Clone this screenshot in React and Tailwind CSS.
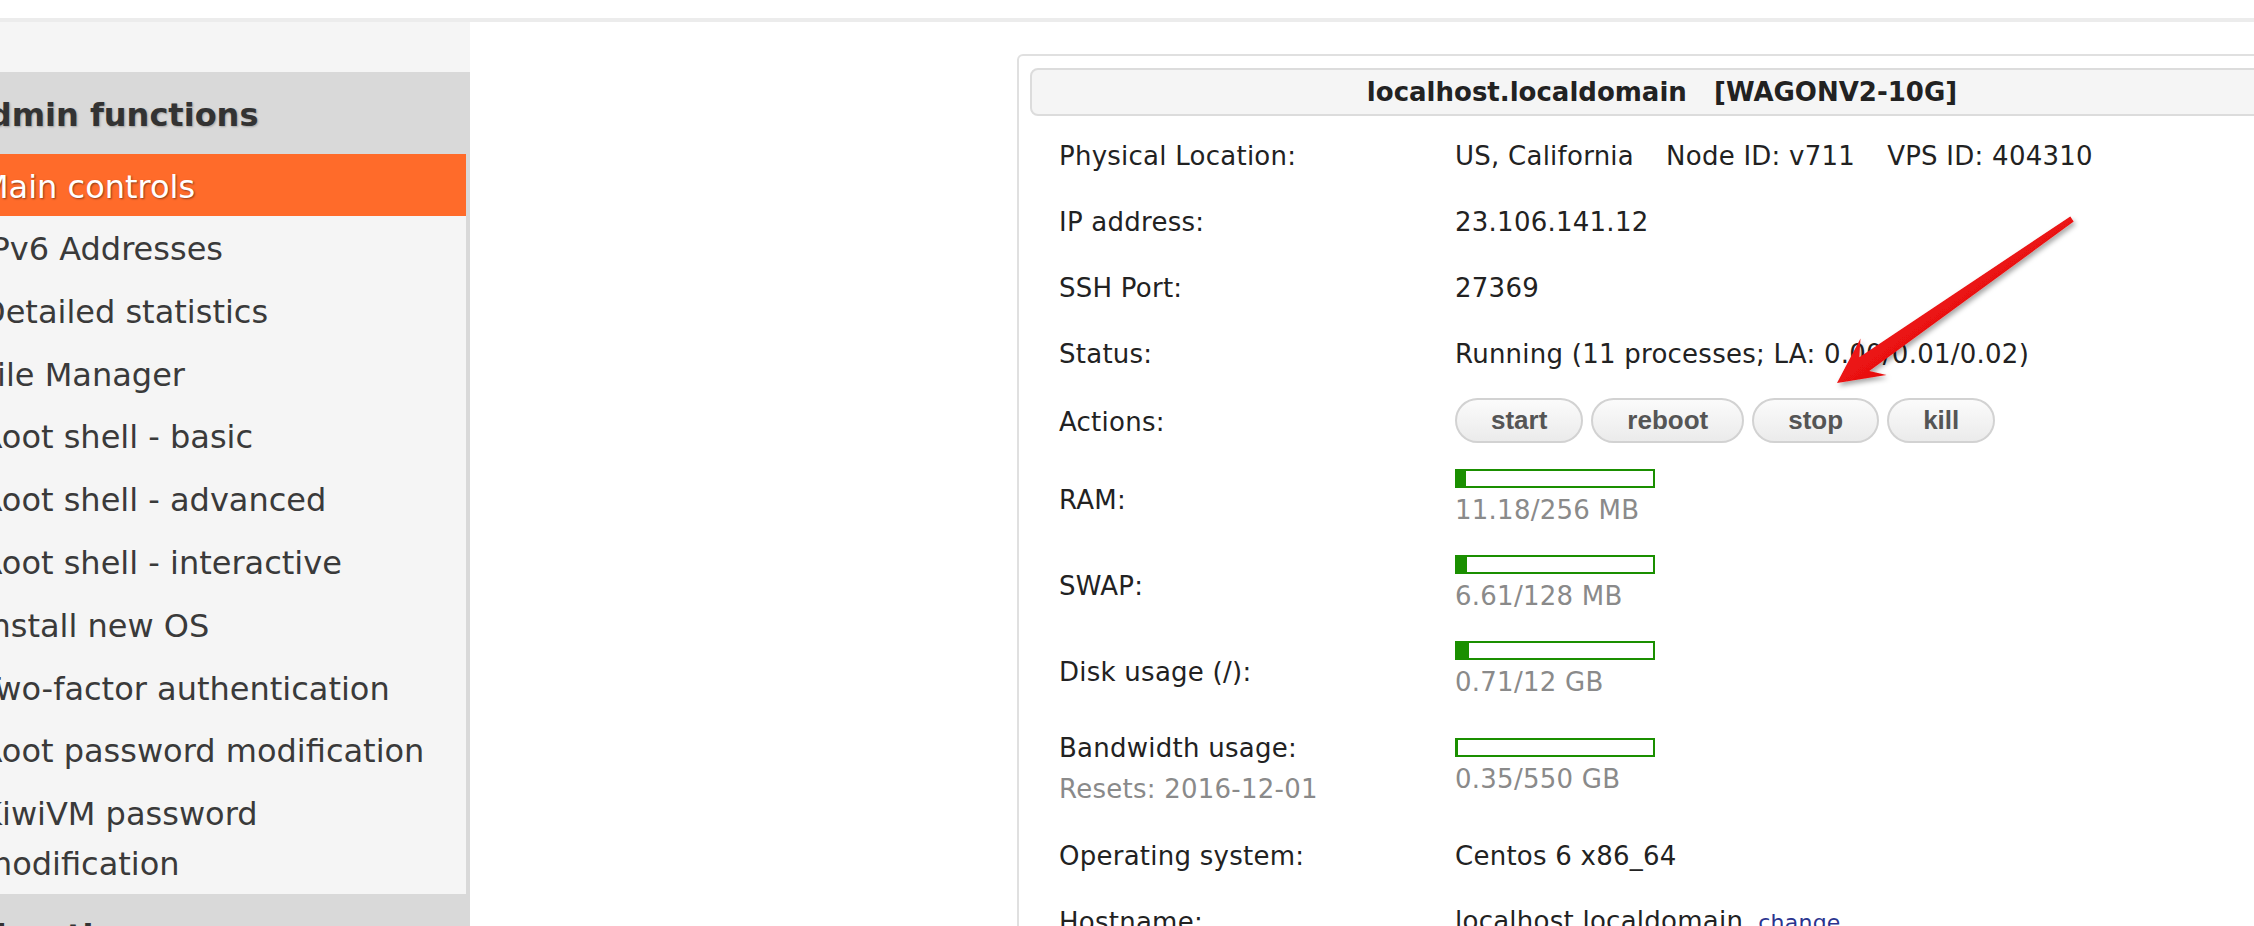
import React from 'react'

const menu = [
  'Main controls',
  'IPv6 Addresses',
  'Detailed statistics',
  'File Manager',
  'Root shell - basic',
  'Root shell - advanced',
  'Root shell - interactive',
  'Install new OS',
  'Two-factor authentication',
  'Root password modification',
]

const usage = [
  { label: 'RAM:', used: 11.18, total: 256, unit: 'MB' },
  { label: 'SWAP:', used: 6.61, total: 128, unit: 'MB' },
  { label: 'Disk usage (/):', used: 0.71, total: 12, unit: 'GB' },
]

function Sidebar() {
  return (
    <aside className="w-[470px] shrink-0 bg-[#f5f5f5] border-r-4 border-[#d9d9d9] text-[32px] text-[#3a3a3a]">
      <div className="h-[50px] -mr-1 bg-[#f5f5f5]" />
      <div className="h-[82px] -mr-1 pt-[3px] flex items-center bg-[#d9d9d9]">
        <div className="-ml-[36px] font-bold text-[#333] whitespace-nowrap [text-shadow:1px_1px_2px_rgba(0,0,0,0.25)]">
          Admin functions
        </div>
      </div>
      {menu.map((item, i) => (
        <div
          key={item}
          className={
            i === 0
              ? 'pt-[8px] pb-[4px] leading-[50px] bg-[#ff6b2a] text-white [text-shadow:1px_1px_2px_rgba(0,0,0,0.45)]'
              : 'pt-[8px] pb-[4.8px] leading-[50px]'
          }
        >
          <div className="-ml-[19px] whitespace-nowrap">{item}</div>
        </div>
      ))}
      <div className="pt-[8px] pb-[4.8px] leading-[50px]">
        <div className="-ml-[19px] whitespace-nowrap">
          KiwiVM password
          <br />
          modification
        </div>
      </div>
      <div className="h-[82px] -mr-1 pt-[3px] flex items-center bg-[#d9d9d9]">
        <div className="-ml-[36px] font-bold text-[#333] whitespace-nowrap">Migration</div>
      </div>
    </aside>
  )
}

function Bar({ used, total, unit }) {
  const pct = (used / total) * 100
  return (
    <div>
      <div className="w-[200px] h-[19px] border-2 border-[#1a8f00] bg-white">
        <div className="h-full bg-[#1a8f00]" style={{ width: `${pct}%` }} />
      </div>
      <div className="mt-[5px] leading-[34px] text-[#8a8a8a]">
        {used}/{total} {unit}
      </div>
    </div>
  )
}

function Row({ label, h, bar, children }) {
  return (
    <div className={`flex items-center ${h}`}>
      <div className="w-[396px] shrink-0 pt-[3px]">{label}</div>
      <div className={bar ? '' : 'pt-[3px]'}>{children}</div>
    </div>
  )
}

function Btn({ children }) {
  return (
    <button className="h-[45px] px-[34px] rounded-full border-2 border-[#d2d2d2] bg-gradient-to-b from-[#fbfbfb] to-[#ebebeb] font-['Liberation_Sans',Arial,sans-serif] font-bold text-[26px] tracking-normal text-[#555]">
      {children}
    </button>
  )
}

// red annotation arrow drawn over the status row
function Arrow() {
  return (
    <svg
      className="absolute left-0 top-0 pointer-events-none"
      width="2254"
      height="926"
      viewBox="0 0 2254 926"
    >
      <defs>
        <linearGradient id="red" x1="0" y1="0" x2="1" y2="1">
          <stop offset="0" stopColor="#ff2424" />
          <stop offset="1" stopColor="#d60000" />
        </linearGradient>
        <filter id="sh" x="-20%" y="-20%" width="140%" height="140%">
          <feDropShadow dx="2" dy="3" stdDeviation="2.5" floodColor="#000" floodOpacity="0.35" />
        </filter>
      </defs>
      <polygon
        points="1837,383 1886.5,375 1869.3,371 2073.7,221.6 2070.3,216.4 1859.3,357.3 1860.5,338.5"
        fill="url(#red)"
        filter="url(#sh)"
      />
    </svg>
  )
}

export default function App() {
  return (
    <div className="relative w-[2254px] h-[926px] overflow-hidden bg-white font-['DejaVu_Sans',sans-serif] text-[#222]">
      <div className="h-[18px]" />
      <div className="h-[4px] bg-[#ececec]" />
      <div className="flex">
        <Sidebar />
        <main className="flex-1 pt-[32px] pl-[547px] text-[26px]">
          <div className="w-[1290px] rounded-[6px] border-2 border-[#e0e0e0] px-[11px] pt-[12px] pb-4">
            <div className="h-[48px] w-[1264px] rounded-[8px] border-2 border-[#dcdcdc] bg-[#f5f5f5] flex items-center justify-center font-bold text-[#222]">
              localhost.localdomain{'\u00a0\u00a0\u00a0'}[WAGONV2-10G]
            </div>
            <div className="mt-[5px] pl-[29px] leading-[32px] tracking-[0.25px]">
              <Row label="Physical Location:" h="h-[66px]">
                <span>US, California</span>
                <span className="ml-[32px]">Node ID: v711</span>
                <span className="ml-[32px]">VPS ID: 404310</span>
              </Row>
              <Row label="IP address:" h="h-[66px]">23.106.141.12</Row>
              <Row label="SSH Port:" h="h-[66px]">27369</Row>
              <Row label="Status:" h="h-[66px]">Running (11 processes; LA: 0.00/0.01/0.02)</Row>
              <Row label="Actions:" h="h-[70px]" bar>
                <div className="flex gap-[8px]">
                  <Btn>start</Btn>
                  <Btn>reboot</Btn>
                  <Btn>stop</Btn>
                  <Btn>kill</Btn>
                </div>
              </Row>
              {usage.map((u) => (
                <Row key={u.label} label={u.label} h="h-[86px]" bar>
                  <Bar used={u.used} total={u.total} unit={u.unit} />
                </Row>
              ))}
              <Row
                h="h-[108px]"
                bar
                label={
                  <div className="leading-[41px]">
                    <div>Bandwidth usage:</div>
                    <div className="text-[#8a8a8a]">Resets: 2016-12-01</div>
                  </div>
                }
              >
                <Bar used={0.35} total={550} unit="GB" />
              </Row>
              <Row label="Operating system:" h="h-[66px]">Centos 6 x86_64</Row>
              <Row label="Hostname:" h="h-[66px]">
                <span>localhost.localdomain</span>
                <a className="ml-[15px] text-[22px] text-[#2a348f]">change</a>
              </Row>
            </div>
          </div>
        </main>
      </div>
      <Arrow />
    </div>
  )
}
